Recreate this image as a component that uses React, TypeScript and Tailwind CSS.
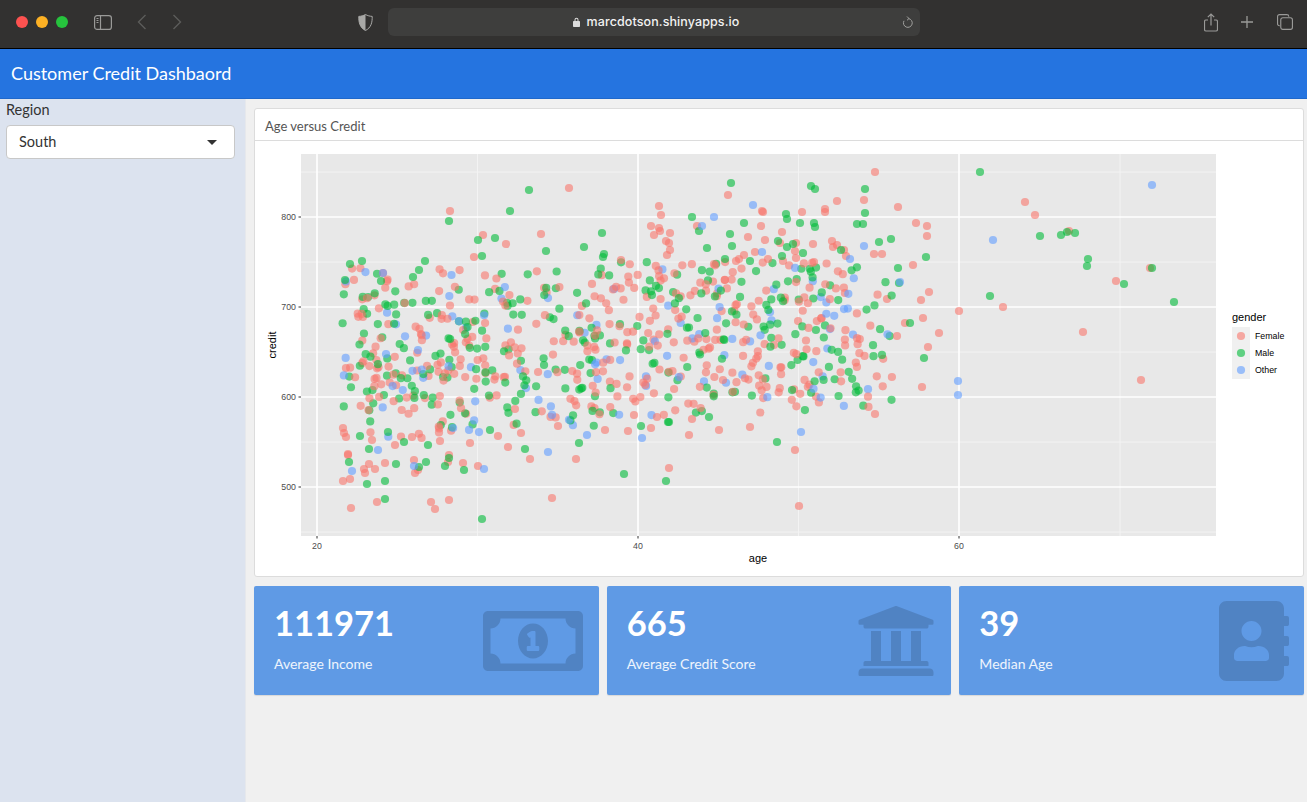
import { FaAddressBook, FaRegMoneyBillAlt, FaUniversity } from "react-icons/fa";

type Gender = "f" | "m" | "o";
type Point = [number, number, Gender];

const colors: Record<Gender, string> = { f: "#F8766D", m: "#00BA38", o: "#619CFF" };

// points read off the plot, in page pixels
const traced: Record<Gender, number[][]> = {
  f: [
    [875, 172], [569, 188], [450, 211], [728, 195], [864, 200], [837, 201], [898, 207], [659, 206], [661, 215], [762, 211],
    [763, 212], [802, 212], [825, 209], [825, 212], [916, 223], [927, 226], [927, 236], [651, 226], [659, 228], [660, 231],
    [654, 235], [670, 233], [697, 226], [761, 226], [782, 232], [748, 237], [666, 241], [669, 243], [765, 240], [780, 243],
    [796, 243], [813, 244], [832, 241], [837, 245], [833, 247], [670, 250], [667, 255], [795, 251], [844, 250], [755, 252],
    [744, 255], [846, 256], [874, 254], [882, 254], [796, 258], [768, 259], [739, 259], [736, 261], [621, 260], [783, 261],
    [814, 262], [483, 235], [506, 244], [474, 257], [541, 234], [383, 273], [1025, 202], [1035, 215], [1069, 231], [1116, 281],
    [1150, 268], [1003, 307], [959, 311], [1083, 332], [1141, 380], [799, 506], [669, 468], [576, 459], [795, 450], [628, 431],
    [651, 428], [689, 435], [719, 430], [750, 427], [692, 419], [657, 417], [634, 415], [875, 414], [348, 455], [351, 508],
    [343, 481], [350, 479], [365, 473], [364, 469], [369, 464], [375, 469], [385, 463], [377, 502], [414, 460], [418, 470],
    [415, 473], [449, 455], [448, 462], [463, 463], [478, 466], [431, 502], [435, 509], [449, 500], [508, 447], [552, 498],
    [343, 428], [344, 433], [346, 437], [348, 454], [372, 440], [395, 445], [412, 437], [440, 441], [470, 443], [498, 436],
    [521, 433], [530, 459], [558, 426], [605, 430], [923, 318], [913, 265], [929, 292], [921, 300], [939, 333], [922, 387],
    [897, 336], [905, 323], [928, 347],
  ],
  m: [
    [529, 190], [449, 221], [510, 211], [478, 240], [495, 238], [482, 256], [546, 251], [584, 247], [350, 264], [362, 261],
    [425, 261], [419, 270], [413, 277], [345, 280], [381, 281], [731, 183], [811, 186], [815, 189], [865, 189], [692, 217],
    [786, 214], [787, 219], [865, 213], [744, 223], [800, 223], [814, 223], [815, 227], [857, 224], [863, 224], [699, 231],
    [730, 234], [602, 233], [778, 241], [793, 244], [787, 247], [891, 239], [879, 242], [707, 248], [732, 246], [841, 250],
    [803, 253], [782, 256], [926, 257], [725, 259], [604, 254], [603, 257], [750, 261], [980, 172], [990, 296], [1040, 236],
    [1061, 235], [1067, 232], [1075, 233], [1088, 259], [1087, 266], [1124, 284], [1152, 268], [1174, 302], [666, 481],
    [624, 474], [579, 443], [777, 442], [641, 426], [669, 422], [668, 422], [709, 417], [349, 462], [367, 484], [369, 449],
    [396, 464], [385, 481], [385, 499], [419, 467], [426, 462], [428, 445], [449, 458], [445, 466], [464, 470], [482, 519],
    [525, 449], [360, 436], [388, 432], [404, 442], [490, 430], [910, 323], [924, 358], [898, 268], [899, 283],
  ],
  o: [
    [383, 273], [753, 205], [714, 217], [702, 226], [864, 246], [762, 252], [850, 259], [1152, 185], [993, 240], [958, 381],
    [958, 395], [587, 435], [801, 432], [642, 438], [352, 471], [378, 450], [414, 466], [484, 469], [548, 452], [900, 282],
  ],
};

// the dense middle of the cloud, seeded so that it never changes
function makeCloud(count: number) {
  let seed = 48213;
  const rand = () => {
    seed = (seed + 0x6d2b79f5) | 0;
    let t = Math.imul(seed ^ (seed >>> 15), 1 | seed);
    t = (t + Math.imul(t ^ (t >>> 7), 61 | t)) ^ t;
    return ((t ^ (t >>> 14)) >>> 0) / 4294967296;
  };
  const points: Point[] = [];
  while (points.length < count) {
    const x = 342 + rand() * 550;
    if (x > 860 && rand() < 0.6) continue;
    const gauss = (rand() + rand() + rand() + rand() - 2) * 1.73;
    const y = 358 - (x - 342) * 0.055 + gauss * 72;
    const top = x < 600 ? 268 : 262;
    const bottom = 445 - (x - 342) * 0.07;
    if (y < top || y > bottom) continue;
    const pick = rand();
    points.push([x, y, pick < 0.5 ? "f" : pick < 0.89 ? "m" : "o"]);
  }
  return points;
}

const points: Point[] = [
  ...makeCloud(760),
  ...(Object.keys(traced) as Gender[]).flatMap((g) => traced[g].map(([x, y]): Point => [x, y, g])),
];

function CreditPlot() {
  return (
    <svg viewBox="255 141 1048 435" className="block w-[1048px] h-[435px]" fontFamily="'Liberation Sans', Arial, sans-serif">
      <rect x={301} y={154} width={915} height={382} fill="#e8e8e8" />
      {[172, 262, 352, 442, 532].map((y) => (
        <line key={y} x1={301} x2={1216} y1={y} y2={y} stroke="#f3f3f3" strokeWidth={1} />
      ))}
      {[477.5, 798.5, 1120].map((x) => (
        <line key={x} x1={x} x2={x} y1={154} y2={536} stroke="#f3f3f3" strokeWidth={1} />
      ))}
      {[217, 307, 397, 487].map((y) => (
        <line key={y} x1={301} x2={1216} y1={y} y2={y} stroke="#fff" strokeWidth={1.6} />
      ))}
      {[317, 638, 959].map((x) => (
        <line key={x} x1={x} x2={x} y1={154} y2={536} stroke="#fff" strokeWidth={1.6} />
      ))}
      {points.map(([x, y, g], i) => (
        <circle key={i} cx={x} cy={y} r={4.1} fill={colors[g]} fillOpacity={0.6} />
      ))}
      {[
        [217, "800"],
        [307, "700"],
        [397, "600"],
        [487, "500"],
      ].map(([y, label]) => (
        <g key={label}>
          <line x1={298.5} x2={301} y1={y} y2={y} stroke="#333" />
          <text x={296} y={Number(y) + 3} textAnchor="end" fontSize={8.8} fill="#4d4d4d">
            {label}
          </text>
        </g>
      ))}
      {[
        [317, "20"],
        [638, "40"],
        [959, "60"],
      ].map(([x, label]) => (
        <g key={label}>
          <line x1={x} x2={x} y1={536} y2={538.5} stroke="#333" />
          <text x={x} y={549} textAnchor="middle" fontSize={8.8} fill="#4d4d4d">
            {label}
          </text>
        </g>
      ))}
      <text x={758} y={562} textAnchor="middle" fontSize={11} fill="#000">
        age
      </text>
      <text x={276} y={345} textAnchor="middle" fontSize={11} fill="#000" transform="rotate(-90 276 345)">
        credit
      </text>
      <text x={1232} y={321} fontSize={11} fill="#000">
        gender
      </text>
      <rect x={1232} y={327} width={18} height={52} fill="#f0f0f0" />
      {[
        [336, "Female", "f"],
        [353, "Male", "m"],
        [370, "Other", "o"],
      ].map(([y, label, g]) => (
        <g key={label}>
          <circle cx={1241} cy={y} r={4.1} fill={colors[g as Gender]} fillOpacity={0.6} />
          <text x={1255} y={Number(y) + 3} fontSize={8.8} fill="#000">
            {label}
          </text>
        </g>
      ))}
    </svg>
  );
}

function ValueBox({ value, label, icon }: { value: string; label: string; icon: React.ReactNode }) {
  return (
    <div className="relative flex-1 h-[109px] rounded-[2px] bg-[#5f9ae5] text-white px-5 pt-[12px] shadow-[0_1px_1px_rgba(0,0,0,0.1)] overflow-hidden">
      <div className="text-[34.500px] leading-[50px] font-bold">{value}</div>
      <div className="mt-[5px] text-[14px] leading-[22px] text-white/90">{label}</div>
      <div className="absolute right-[15px] top-[15px] text-black/15">{icon}</div>
    </div>
  );
}

function BrowserBar() {
  return (
    <div className="flex h-[49px] shrink-0 items-center border-b border-black bg-[#323130] pb-1 text-[#9a9a98]">
      <div className="flex w-[94px] items-center gap-2 pl-4">
        <span className="h-3 w-3 rounded-full bg-[#fd5250]" />
        <span className="h-3 w-3 rounded-full bg-[#fdb124]" />
        <span className="h-3 w-3 rounded-full bg-[#26c33d]" />
      </div>
      <svg width="18" height="15" viewBox="0 0 18 15" fill="none" stroke="currentColor" strokeWidth="1.2">
        <rect x="0.6" y="0.6" width="16.8" height="13.8" rx="2.5" />
        <path d="M6.5 0.6v13.8" />
        <path d="M2.5 3.5h2M2.5 5.5h2M2.5 7.5h2" />
      </svg>
      <svg className="ml-[25px]" width="10" height="16" viewBox="0 0 10 16" fill="none" stroke="#5c5c5a" strokeWidth="1.4">
        <path d="M8.5 1L1.5 8l7 7" />
      </svg>
      <svg className="ml-[25px]" width="10" height="16" viewBox="0 0 10 16" fill="none" stroke="#5c5c5a" strokeWidth="1.4">
        <path d="M1.5 1l7 7-7 7" />
      </svg>
      <svg className="ml-[176px]" width="15" height="17" viewBox="0 0 15 17">
        <path d="M7.5 0.5C5.5 1.7 3 2.3 0.8 2.4 0.6 8.5 2 13.8 7.5 16.5 13 13.8 14.4 8.5 14.2 2.4 12 2.3 9.5 1.7 7.5 0.5z" fill="none" stroke="#a8a8a6" strokeWidth="1" />
        <path d="M7.5 0.5C5.5 1.7 3 2.3 0.8 2.4 0.6 8.5 2 13.8 7.5 16.5z" fill="#a8a8a6" />
      </svg>
      <div className="relative ml-[15px] flex h-7 w-[532px] items-center justify-center gap-[7px] rounded-md bg-[#3e3e3d] pl-[4px] text-white">
        <svg width="7" height="10" viewBox="0 0 7 10" fill="#dcdcdc">
          <path d="M1.5 4V2.8a2 2 0 0 1 4 0V4h.7a.8.8 0 0 1 .8.8v4.4a.8.8 0 0 1-.8.8H.8A.8.8 0 0 1 0 9.2V4.8A.8.8 0 0 1 .8 4zm1 0h2V2.8a1 1 0 0 0-2 0z" />
        </svg>
        <span className="font-['Inter',sans-serif] text-[12.5px] font-medium tracking-[0.1px] text-[#f2f2f2]">marcdotson.shinyapps.io</span>
        <svg className="absolute right-[7px] top-[8px]" width="11" height="13" viewBox="0 0 11 13" fill="none" stroke="#a0a09e" strokeWidth="1">
          <path d="M6.5 2.6A4.4 4.4 0 1 1 2 4.8" />
          <path d="M5 0.5l2 2-2 1.8" />
        </svg>
      </div>
      <svg className="ml-[284px]" width="14" height="19" viewBox="0 0 14 19" fill="none" stroke="currentColor" strokeWidth="1.2">
        <path d="M4 7H2a1.5 1.5 0 0 0-1.5 1.5v8A1.5 1.5 0 0 0 2 18h10a1.5 1.5 0 0 0 1.5-1.5v-8A1.5 1.5 0 0 0 12 7h-2" />
        <path d="M7 12.5V1M3.8 4.2L7 1l3.2 3.2" />
      </svg>
      <svg className="ml-[22px]" width="14" height="14" viewBox="0 0 14 14" stroke="currentColor" strokeWidth="1.3">
        <path d="M7 1v12M1 7h12" />
      </svg>
      <svg className="ml-[23px]" width="16" height="16" viewBox="0 0 17 17" fill="none" stroke="currentColor" strokeWidth="1.2">
        <path d="M3 12.5H2.600A2 2 0 0 1 .6 10.500V2.600a2 2 0 0 1 2-2h7.900a2 2 0 0 1 2 2V3" />
        <rect x="4" y="4" width="12.400" height="12.400" rx="2.200" />
      </svg>
    </div>
  );
}

export default function App() {
  return (
    <div className="flex h-[802px] w-[1307px] flex-col overflow-hidden bg-[#f0f0f0] font-['Lato','Noto_Sans',sans-serif] text-[#333]">
      <BrowserBar />
      <header className="flex h-[50px] shrink-0 items-center border-b border-[#1f68cb] bg-[#2574e0] pl-[11px] text-[18px] text-white">
        Customer Credit Dashbaord
      </header>
      <div className="flex flex-1">
        <aside className="w-[246px] shrink-0 border-r border-[#e6e8ec] bg-[#dce3ef] pl-[6px]">
          <div className="text-[14.500px] leading-[22px]">Region</div>
          <div className="mt-[4px] flex h-[34px] w-[229px] items-center justify-between rounded-[4px] border border-[#c8c8c8] bg-white pl-3 pr-[17px] text-[14.500px]">
            South
            <span className="h-0 w-0 border-x-[5px] border-t-[5px] border-x-transparent border-t-[#333]" />
          </div>
        </aside>
        <main className="flex-1 pl-2 pr-[3px] pt-[9px]">
          <section className="rounded-[3px] border border-[#dcdcdc] bg-white">
            <div className="flex h-[32px] items-center border-b border-[#dcdcdc] px-[10px] pt-[4px] text-[13px] text-[#555]">Age versus Credit</div>
            <CreditPlot />
          </section>
          <div className="mt-[9px] flex gap-2">
            <ValueBox value="111971" label="Average Income" icon={<FaRegMoneyBillAlt className="mr-px h-20 w-[100px]" />} />
            <ValueBox value="665" label="Average Credit Score" icon={<FaUniversity className="h-20 w-20" />} />
            <ValueBox value="39" label="Median Age" icon={<FaAddressBook className="h-20 w-[70px]" />} />
          </div>
        </main>
      </div>
    </div>
  );
}
